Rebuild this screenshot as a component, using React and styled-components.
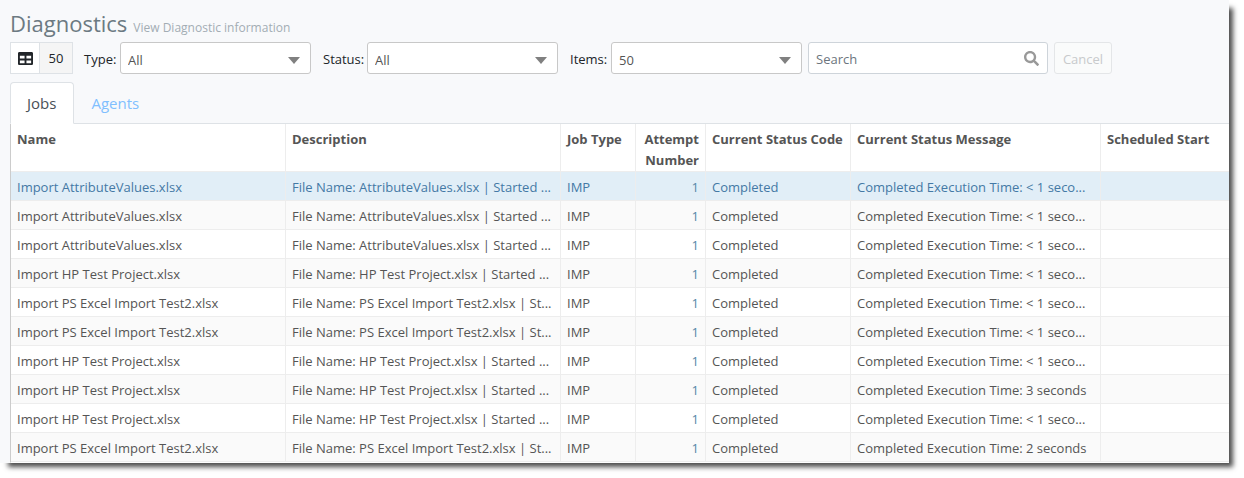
import React from "react";
import styled, { createGlobalStyle } from "styled-components";
import { FaSearch, FaTable } from "react-icons/fa";

const GlobalStyle = createGlobalStyle`
  *, *::before, *::after { box-sizing: border-box; }
  body {
    margin: 0;
    background: #fff;
    color: #212529;
    font-family: "Segoe UI", "Open Sans", "Noto Sans", sans-serif;
    font-size: 13px;
    line-height: 21px;
  }
  button, input, select { font: inherit; margin: 0; }
`;

const Panel = styled.main`
  margin: 0 15px 15px 0;
  padding: 8px 0 0 10px;
  background: #f8f9fb;
  box-shadow: 6px 6px 5px -2px rgba(0, 0, 0, 0.7);
`;

const PageHeader = styled.header`
  display: flex;
  align-items: baseline;
  gap: 6px;
  height: 34px;
`;

const Title = styled.h1`
  margin: 0;
  color: #6c7a82;
  font-size: 22px;
  font-weight: 400;
  line-height: 30px;
`;

const Subtitle = styled.small`
  color: #a3adb4;
  font-size: 12px;
`;

const Toolbar = styled.form`
  display: flex;
  align-items: center;
  gap: 6px;
  height: 32px;
`;

const ButtonGroup = styled.div`
  display: flex;
  height: 32px;
  margin-right: 5px;
  border: 1px solid #dee2e6;
`;

const GroupButton = styled.button`
  display: flex;
  align-items: center;
  justify-content: center;
  width: ${(p) => (p.$shaded ? 33 : 28)}px;
  padding: 0;
  border: 0;
  border-left: ${(p) => (p.$shaded ? "1px solid #dee2e6" : "0")};
  background: ${(p) => (p.$shaded ? "#f5f5f5" : "#fff")};
  color: #212529;
`;

const Field = styled.label`
  display: flex;
  align-items: center;
  width: ${(p) => p.$width}px;
  margin-right: ${(p) => (p.$last ? 0 : 6)}px;
`;

const FieldName = styled.span`
  flex: 1;
  padding-top: 2px;
`;

const SelectBox = styled.span`
  position: relative;
  display: block;
  width: 191px;
`;

const Select = styled.select`
  display: block;
  width: 100%;
  height: 32px;
  padding: 4px 28px 0 7px;
  border: 1px solid #c8c8c8;
  border-radius: 3px;
  appearance: none;
  background: #fff;
  color: #555;
`;

const Arrow = styled.svg`
  position: absolute;
  top: 15px;
  right: 11px;
  pointer-events: none;
`;

const SearchBox = styled.div`
  display: flex;
  align-items: center;
  width: 240px;
  height: 32px;
  padding: 0 8px 0 7px;
  border: 1px solid #ced4da;
  border-radius: 3px;
  background: #fff;
  color: #999;
`;

const SearchInput = styled.input`
  flex: 1;
  min-width: 0;
  padding: 2px 0 0;
  border: 0;
  outline: 0;
  background: transparent;
  color: #555;
  &::placeholder { color: #6c757d; opacity: 1; }
`;

const CancelButton = styled.button`
  width: 58px;
  height: 32px;
  padding: 2px 0 0;
  border: 1px solid #e4e6e8;
  border-radius: 3px;
  background: #fafbfb;
  color: #c8cacc;
`;

const Tabs = styled.div`
  display: flex;
  height: 42px;
  margin-top: 8px;
  border-bottom: 1px solid #dee2e6;
`;

const Tab = styled.button`
  height: 42px;
  padding: 0 17px 0 16px;
  border: 1px solid ${(p) => (p.$active ? "#dee2e6" : "transparent")};
  border-bottom-color: ${(p) => (p.$active ? "#fff" : "transparent")};
  border-radius: 4px 4px 0 0;
  background: ${(p) => (p.$active ? "#fff" : "transparent")};
  color: ${(p) => (p.$active ? "#495057" : "#80bfff")};
  font-size: 15px;
`;

const Grid = styled.table`
  width: 100%;
  table-layout: fixed;
  border-collapse: separate;
  border-spacing: 0;
  border-left: 1px solid #ccc;
  border-bottom: 1px solid #fff;
  background: #fff;
  color: #555;
`;

const Column = styled.col`
  width: ${(p) => (p.$width ? `${p.$width}px` : "auto")};
`;

const HeadCell = styled.th`
  height: 48px;
  padding: 5px 6px 0;
  border-right: 1px solid #ededed;
  border-bottom: 1px solid #ededed;
  text-align: ${(p) => (p.$numeric ? "right" : "left")};
  vertical-align: top;
  font-weight: 700;
  &:last-child { border-right: 0; }
`;

const Cell = styled.td`
  height: 29px;
  padding: 5px 6px 2px;
  overflow: hidden;
  border-right: 1px solid #ededed;
  border-bottom: 1px solid #ededed;
  color: ${(p) => (p.$numeric ? "#5488a8" : "inherit")};
  text-align: ${(p) => (p.$numeric ? "right" : "left")};
  text-overflow: ellipsis;
  white-space: nowrap;
  &:last-child { border-right: 0; }
`;

const Row = styled.tr`
  background: #fff;
  &:nth-child(even) { background: #fafafa; }
  &[aria-selected="true"] {
    background: #e1eef7;
    color: #4479a5;
  }
`;

const columns = [
  { label: "Name", width: 275 },
  { label: "Description", width: 275 },
  { label: "Job Type", width: 75 },
  { label: "Attempt Number", width: 70, numeric: true },
  { label: "Current Status Code", width: 145 },
  { label: "Current Status Message", width: 250 },
  { label: "Scheduled Start" },
];

const attributes = { file: "AttributeValues.xlsx", note: "Started ..." };
const project = { file: "HP Test Project.xlsx", note: "Started ..." };
const excel = { file: "PS Excel Import Test2.xlsx", note: "St..." };

const jobs = [
  { ...attributes, time: "< 1 seco..." },
  { ...attributes, time: "< 1 seco..." },
  { ...attributes, time: "< 1 seco..." },
  { ...project, time: "< 1 seco..." },
  { ...excel, time: "< 1 seco..." },
  { ...excel, time: "< 1 seco..." },
  { ...project, time: "< 1 seco..." },
  { ...project, time: "3 seconds" },
  { ...project, time: "< 1 seco..." },
  { ...excel, time: "2 seconds" },
];

function SelectField({ name, value, width, last }) {
  return (
    <Field $width={width} $last={last}>
      <FieldName>{name}:</FieldName>
      <SelectBox>
        <Select defaultValue={value}>
          <option>{value}</option>
        </Select>
        <Arrow width="12" height="7" viewBox="0 0 12 7" aria-hidden="true">
          <path d="M0 0H12L6 7Z" fill="#808080" />
        </Arrow>
      </SelectBox>
    </Field>
  );
}

export default function App() {
  return (
    <>
      <GlobalStyle />
      <Panel>
        <PageHeader>
          <Title>Diagnostics</Title>
          <Subtitle>View Diagnostic information</Subtitle>
        </PageHeader>
        <Toolbar onSubmit={(e) => e.preventDefault()}>
          <ButtonGroup>
            <GroupButton type="button" aria-label="Choose columns">
              <FaTable size={15} />
            </GroupButton>
            <GroupButton type="button" $shaded>50</GroupButton>
          </ButtonGroup>
          <SelectField name="Type" value="All" width={227} />
          <SelectField name="Status" value="All" width={235} />
          <SelectField name="Items" value="50" width={232} last />
          <SearchBox>
            <SearchInput type="text" placeholder="Search" aria-label="Search" />
            <FaSearch size={15} aria-hidden="true" />
          </SearchBox>
          <CancelButton type="button" disabled>Cancel</CancelButton>
        </Toolbar>
        <Tabs role="tablist">
          <Tab type="button" role="tab" aria-selected="true" $active>Jobs</Tab>
          <Tab type="button" role="tab" aria-selected="false">Agents</Tab>
        </Tabs>
        <Grid>
          <colgroup>
            {columns.map((c) => <Column key={c.label} $width={c.width} />)}
          </colgroup>
          <thead>
            <tr>
              {columns.map((c) => (
                <HeadCell key={c.label} scope="col" $numeric={c.numeric}>{c.label}</HeadCell>
              ))}
            </tr>
          </thead>
          <tbody>
            {jobs.map((job, i) => (
              <Row key={i} aria-selected={i === 0}>
                <Cell>Import {job.file}</Cell>
                <Cell>File Name: {job.file} | {job.note}</Cell>
                <Cell>IMP</Cell>
                <Cell $numeric>1</Cell>
                <Cell>Completed</Cell>
                <Cell>Completed Execution Time: {job.time}</Cell>
                <Cell />
              </Row>
            ))}
          </tbody>
        </Grid>
      </Panel>
    </>
  );
}
